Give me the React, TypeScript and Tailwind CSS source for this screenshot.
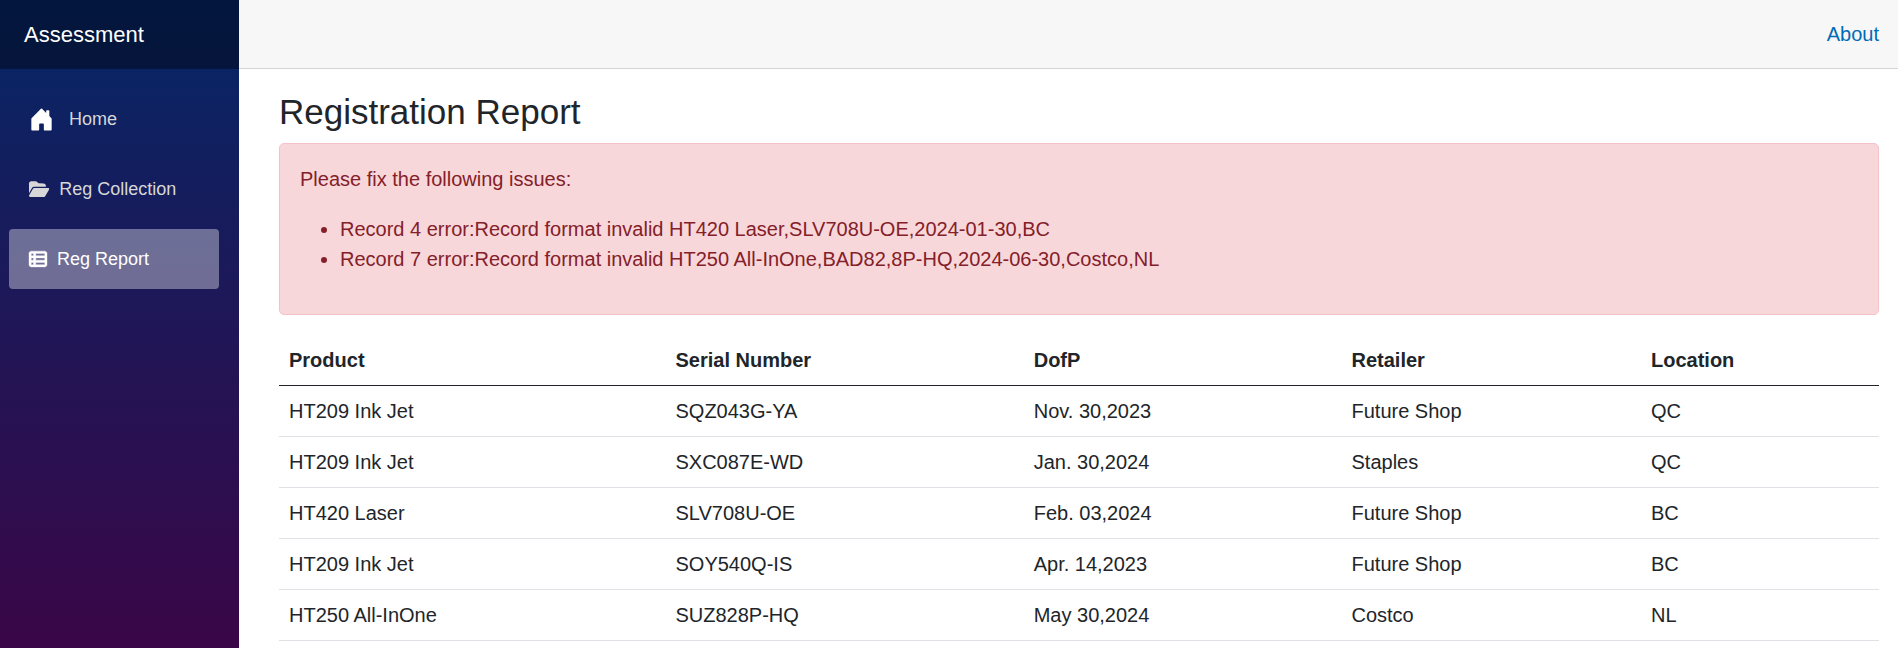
import { BsHouseDoorFill } from "react-icons/bs";
import { FaFolderOpen, FaTableList } from "react-icons/fa6";

const issues = [
  "Record 4 error:Record format invalid HT420 Laser,SLV708U-OE,2024-01-30,BC",
  "Record 7 error:Record format invalid HT250 All-InOne,BAD82,8P-HQ,2024-06-30,Costco,NL",
];

const columns = [
  { title: "Product", width: "w-[386.5px]" },
  { title: "Serial Number", width: "w-[358.2px]" },
  { title: "DofP", width: "w-[317.8px]" },
  { title: "Retailer", width: "w-[299.5px]" },
  { title: "Location", width: "w-[238px]" },
];

const rows = [
  ["HT209 Ink Jet", "SQZ043G-YA", "Nov. 30,2023", "Future Shop", "QC"],
  ["HT209 Ink Jet", "SXC087E-WD", "Jan. 30,2024", "Staples", "QC"],
  ["HT420 Laser", "SLV708U-OE", "Feb. 03,2024", "Future Shop", "BC"],
  ["HT209 Ink Jet", "SOY540Q-IS", "Apr. 14,2023", "Future Shop", "BC"],
  ["HT250 All-InOne", "SUZ828P-HQ", "May 30,2024", "Costco", "NL"],
];

function Sidebar() {
  return (
    <aside className="flex w-[239px] shrink-0 flex-col bg-linear-to-b/srgb from-[#052767] to-[#3a0647]">
      <div className="flex h-[69px] shrink-0 items-center bg-black/40 pl-6 text-[22px] text-white">
        Assessment
      </div>
      <nav className="flex flex-col gap-2.5 pt-5 pr-5 pl-[9px] text-[18px] text-[#d7d7d7]">
        <a href="#home" className="flex h-[60px] items-center rounded-[4px] pl-5">
          <BsHouseDoorFill className="mr-[15px] size-[25px] text-white" />
          Home
        </a>
        <a href="#collection" className="flex h-[60px] items-center gap-2.5 rounded-[4px] pl-5">
          <FaFolderOpen className="h-[18px] w-[20.25px]" />
          Reg Collection
        </a>
        <a
          href="#report"
          className="flex h-[60px] items-center gap-2.5 rounded-[4px] bg-white/37 pl-5 text-white"
        >
          <FaTableList className="size-[18px] overflow-visible stroke-white stroke-[10]" />
          Reg Report
        </a>
      </nav>
    </aside>
  );
}

function Alert() {
  return (
    <div className="mb-5 h-[172px] rounded-[5px] border border-[#f5c2c7] bg-[#f8d7da] p-5 text-[#842029]">
      <p className="mb-5">Please fix the following issues:</p>
      <ul className="list-disc pl-10">
        {issues.map((issue) => (
          <li key={issue}>{issue}</li>
        ))}
      </ul>
    </div>
  );
}

function ReportTable() {
  return (
    <table className="w-[1600px] table-fixed border-separate border-spacing-0 text-left">
      <thead>
        <tr>
          {columns.map((column) => (
            <th
              key={column.title}
              className={`${column.width} h-[51px] border-b border-[#212529] px-2.5 py-0 font-bold`}
            >
              {column.title}
            </th>
          ))}
        </tr>
      </thead>
      <tbody>
        {rows.map((row) => (
          <tr key={row[1]}>
            {row.map((cell, i) => (
              <td key={i} className="h-[51px] border-b border-[#dee2e6] px-2.5 py-0">
                {cell}
              </td>
            ))}
          </tr>
        ))}
      </tbody>
    </table>
  );
}

export default function App() {
  return (
    <div className="flex h-[648px] overflow-hidden bg-white font-['Liberation_Sans',Arial,sans-serif] text-[20px] leading-[30px] text-[#212529]">
      <Sidebar />
      <main className="flex min-w-0 flex-1 flex-col">
        <header className="flex h-[69px] shrink-0 items-center justify-end border-b border-[#d6d5d5] bg-[#f7f7f7] pr-[19px]">
          <a href="#about" className="text-[#006bb7]">
            About
          </a>
        </header>
        <article className="pt-[22px] pr-[19px] pl-10">
          <h3 className="mb-2.5 text-[35px] leading-[42px]">Registration Report</h3>
          <Alert />
          <ReportTable />
        </article>
      </main>
    </div>
  );
}
